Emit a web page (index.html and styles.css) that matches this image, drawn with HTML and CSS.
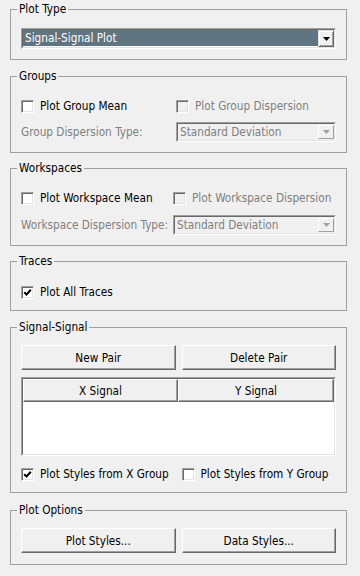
FILE: index.html
```html
<!DOCTYPE html>
<html>
<head>
<meta charset="utf-8">
<link rel="stylesheet" href="styles.css">
</head>
<body>
<fieldset class="grp g1">
  <legend>Plot Type</legend>
  <div class="combo">
    <div class="combo-in">
      <div class="combo-text sel">Signal-Signal Plot</div>
      <div class="combo-btn"><svg width="7" height="4" viewBox="0 0 7 4"><polygon points="0,0 7,0 3.5,4" fill="#000"/></svg></div>
    </div>
  </div>
</fieldset>

<fieldset class="grp g2">
  <legend>Groups</legend>
  <div class="row2 c155">
    <div class="chk"><span class="box"></span><span>Plot Group Mean</span></div>
    <div class="chk dis"><span class="box"></span><span>Plot Group Dispersion</span></div>
  </div>
  <div class="row2 c155 lrow">
    <div class="lbl dis">Group Dispersion Type:</div>
    <div class="combo d">
      <div class="combo-in">
        <div class="combo-text">Standard Deviation</div>
        <div class="combo-btn"><svg width="7" height="4" viewBox="0 0 7 4"><polygon points="0,0 7,0 3.5,4" fill="#a0a0a0"/></svg></div>
      </div>
    </div>
  </div>
</fieldset>

<fieldset class="grp g3">
  <legend>Workspaces</legend>
  <div class="row2 c152">
    <div class="chk"><span class="box"></span><span>Plot Workspace Mean</span></div>
    <div class="chk dis"><span class="box"></span><span>Plot Workspace Dispersion</span></div>
  </div>
  <div class="row2 c152 lrow3">
    <div class="lbl dis">Workspace Dispersion Type:</div>
    <div class="combo d">
      <div class="combo-in">
        <div class="combo-text">Standard Deviation</div>
        <div class="combo-btn"><svg width="7" height="4" viewBox="0 0 7 4"><polygon points="0,0 7,0 3.5,4" fill="#a0a0a0"/></svg></div>
      </div>
    </div>
  </div>
</fieldset>

<fieldset class="grp g4">
  <legend>Traces</legend>
  <div class="chk"><span class="box on"><svg width="9" height="9" viewBox="0 0 9 9"><polyline points="1.2,4.2 3.5,6.5 7.8,1.8" fill="none" stroke="#000" stroke-width="2"/></svg></span><span>Plot All Traces</span></div>
</fieldset>

<fieldset class="grp g5">
  <legend>Signal-Signal</legend>
  <div class="btns">
    <div class="btn">New Pair</div>
    <div class="btn">Delete Pair</div>
  </div>
  <div class="list">
    <div class="list-in">
      <div class="hdr">
        <div class="hcell hx">X Signal</div>
        <div class="hcell hy">Y Signal</div>
      </div>
    </div>
  </div>
  <div class="halves chkrow5">
    <div class="chk"><span class="box on"><svg width="9" height="9" viewBox="0 0 9 9"><polyline points="1.2,4.2 3.5,6.5 7.8,1.8" fill="none" stroke="#000" stroke-width="2"/></svg></span><span>Plot Styles from X Group</span></div>
    <div class="chk"><span class="box"></span><span>Plot Styles from Y Group</span></div>
  </div>
</fieldset>

<fieldset class="grp g6">
  <legend>Plot Options</legend>
  <div class="btns">
    <div class="btn">Plot Styles...</div>
    <div class="btn">Data Styles...</div>
  </div>
</fieldset>
</body>
</html>
```

FILE: styles.css
```css
html, body {
  margin: 0;
  padding: 0;
  background: #f0f0f0;
}
body {
  width: 360px;
  height: 576px;
  overflow: hidden;
  box-sizing: border-box;
  padding: 2px 0 0 10px;
  font-family: "DejaVu Sans Condensed", "DejaVu Sans", sans-serif;
  font-size: 11.7px;
  color: #000;
}
.grp {
  width: 337px;
  box-sizing: border-box;
  margin: 0;
  border: 1px solid #a0a0a0;
  padding: 0 10px 10px 10px;
  min-width: 0;
}
.grp legend {
  margin-left: -4px;
  padding: 0 2px;
  line-height: 14px;
  height: 14px;
}
.g1 { padding-top: 12px; }
.g2 { margin-top: 9px; padding-top: 15px; }
.g3 { margin-top: 8px; padding-top: 15px; }
.g4 { margin-top: 8px; padding-top: 16px; }
.g5 { margin-top: 9px; padding-top: 11px; }
.g6 { margin-top: 10px; padding-top: 11px; padding-bottom: 11px; }

/* combo */
.combo {
  height: 21px;
  box-sizing: border-box;
  border: 1px solid;
  border-color: #a0a0a0 #ffffff #ffffff #a0a0a0;
}
.combo.d { height: 20px; }
.combo-in {
  height: 100%;
  box-sizing: border-box;
  border: 1px solid;
  border-color: #696969 #e3e3e3 #e3e3e3 #696969;
  background: #fff;
  display: flex;
}
.combo.d .combo-in { background: #f0f0f0; }
.combo-text {
  flex: 1;
  padding-left: 2px;
  line-height: 16px;
  height: 16px;
  white-space: nowrap;
  overflow: hidden;
}
.combo.d .combo-text { color: #7f7f7f; line-height: 16px; }
.combo-text.sel {
  background: #607482;
  color: #fff;
}
.combo-btn {
  width: 16px;
  box-sizing: border-box;
  border: 1px solid;
  border-color: #e3e3e3 #696969 #696969 #e3e3e3;
  box-shadow: inset 1px 1px #ffffff, inset -1px -1px #a0a0a0;
  background: #f0f0f0;
  display: flex;
  align-items: center;
  justify-content: center;
}
.combo.d .combo-btn {
  border-color: #ffffff #a0a0a0 #a0a0a0 #ffffff;
  box-shadow: none;
  margin: 1px 0 1px 0;
}

/* rows */
.row2 {
  display: grid;
  align-items: center;
}
.c155 { grid-template-columns: 155px 1fr; }
.c152 { grid-template-columns: 152px 1fr; }
.lrow { margin-top: 8px; }
.lrow3 { margin-top: 9px; }
.halves {
  display: grid;
  grid-template-columns: 1fr 1fr;
  column-gap: 6px;
}
.chkrow5 { margin-top: 10px; }

/* checkbox */
.chk {
  display: flex;
  align-items: center;
  height: 16px;
  white-space: nowrap;
}
.box {
  width: 13px;
  height: 13px;
  box-sizing: border-box;
  border: 1px solid;
  border-color: #a0a0a0 #ffffff #ffffff #a0a0a0;
  box-shadow: inset 1px 1px #696969, inset -1px -1px #e3e3e3;
  background: #fff;
  margin-right: 6px;
  flex: none;
  display: flex;
  align-items: center;
  justify-content: center;
}
.chk.dis .box { background: #f0f0f0; }
.dis { color: #7f7f7f; }
.lbl { white-space: nowrap; }

/* buttons */
.btns {
  display: grid;
  grid-template-columns: 1fr 1fr;
  column-gap: 6px;
}
.btn {
  height: 25px;
  box-sizing: border-box;
  border: 1px solid;
  border-color: #ffffff #696969 #696969 #ffffff;
  box-shadow: inset -1px -1px #a0a0a0;
  background: #f0f0f0;
  display: flex;
  align-items: center;
  justify-content: center;
}

/* list */
.list {
  margin-top: 7px;
  height: 79px;
  box-sizing: border-box;
  border: 1px solid;
  border-color: #a0a0a0 #ffffff #ffffff #a0a0a0;
}
.list-in {
  height: 100%;
  box-sizing: border-box;
  border: 1px solid;
  border-color: #696969 #e3e3e3 #e3e3e3 #696969;
  background: #fff;
}
.hdr {
  display: flex;
  height: 23px;
}
.hcell {
  box-sizing: border-box;
  border: 1px solid;
  border-color: #ffffff #696969 #696969 #ffffff;
  box-shadow: inset -1px -1px #a0a0a0;
  background: #f0f0f0;
  display: flex;
  align-items: center;
  justify-content: center;
}
.hx { width: 155px; }
.hy { flex: 1; }
```
